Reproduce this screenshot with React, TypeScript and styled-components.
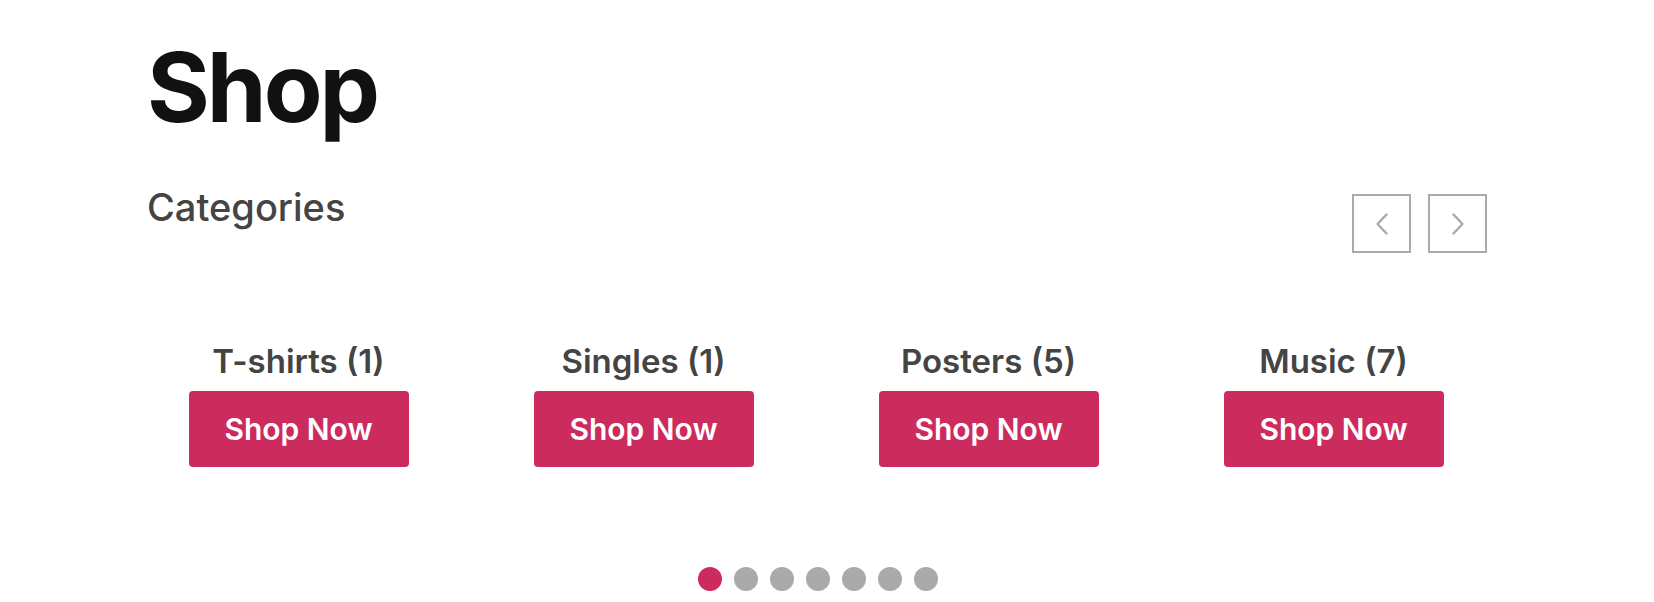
import React from 'react'
import styled, { createGlobalStyle } from 'styled-components'

const GlobalStyle = createGlobalStyle`
  body {
    margin: 0;
    background: #fff;
    font-family: Inter, "Liberation Sans", sans-serif;
  }
`

const Page = styled.div`
  padding: 39px 167px 0 147px;
`

const Title = styled.h1`
  font-size: 96px;
  line-height: 1;
  font-weight: 700;
  color: #111;
  margin: 0;
  letter-spacing: -3px;
`

const HeaderRow = styled.div`
  display: flex;
  justify-content: space-between;
  align-items: flex-start;
  margin-top: 53px;
`

const SubTitle = styled.h2`
  font-size: 38px;
  line-height: 1;
  font-weight: 500;
  color: #444;
  margin: 0;
`

const Nav = styled.div`
  display: flex;
  gap: 17px;
  margin-top: 6px;
`

const NavButton = styled.button`
  width: 59px;
  height: 59px;
  border: 2px solid #aaa;
  background: #fff;
  display: flex;
  align-items: center;
  justify-content: center;
  padding: 0;
  cursor: pointer;
`

const Track = styled.div`
  display: flex;
  margin: 92px 0 0 -21px;
  width: 1380px;
`

const Slide = styled.div`
  width: 345px;
  display: flex;
  flex-direction: column;
  align-items: center;
`

const Label = styled.div`
  font-size: 33px;
  line-height: 1;
  font-weight: 600;
  color: #444;
`

const ShopButton = styled.a`
  margin-top: 13px;
  width: 220px;
  height: 76px;
  border-radius: 4px;
  background: #cc2b5e;
  color: #fff;
  font-size: 30px;
  font-weight: 600;
  display: flex;
  align-items: center;
  justify-content: center;
  text-decoration: none;
`

const Dots = styled.div`
  display: flex;
  justify-content: center;
  gap: 12px;
  margin: 100px 0 0 -147px;
  width: 1654px;
  transform: translateX(-9px);
`

const Dot = styled.span<{ $active?: boolean }>`
  width: 24px;
  height: 24px;
  border-radius: 50%;
  background: ${p => (p.$active ? '#cc2b5e' : '#aaa')};
`

const Chevron = ({ dir }: { dir: 'left' | 'right' }) => (
  <svg width="14" height="24" viewBox="0 0 14 24" fill="none">
    <path
      d={dir === 'left' ? 'M11.5 2.5 L2.5 12 L11.5 21.5' : 'M2.5 2.5 L11.5 12 L2.5 21.5'}
      stroke="#aaa"
      strokeWidth="2.4"
      strokeLinecap="round"
      strokeLinejoin="round"
    />
  </svg>
)

const categories = [
  { name: 'T-shirts', count: 1 },
  { name: 'Singles', count: 1 },
  { name: 'Posters', count: 5 },
  { name: 'Music', count: 7 },
]

const App = () => {
  return (
    <>
      <GlobalStyle />
      <Page>
        <Title>Shop</Title>
        <HeaderRow>
          <SubTitle>Categories</SubTitle>
          <Nav>
            <NavButton aria-label="Previous"><Chevron dir="left" /></NavButton>
            <NavButton aria-label="Next"><Chevron dir="right" /></NavButton>
          </Nav>
        </HeaderRow>
        <Track>
          {categories.map(c => (
            <Slide key={c.name}>
              <Label>{c.name} ({c.count})</Label>
              <ShopButton href="#">Shop Now</ShopButton>
            </Slide>
          ))}
        </Track>
        <Dots>
          {Array.from({ length: 7 }).map((_, i) => (
            <Dot key={i} $active={i === 0} />
          ))}
        </Dots>
      </Page>
    </>
  )
}

export default App
